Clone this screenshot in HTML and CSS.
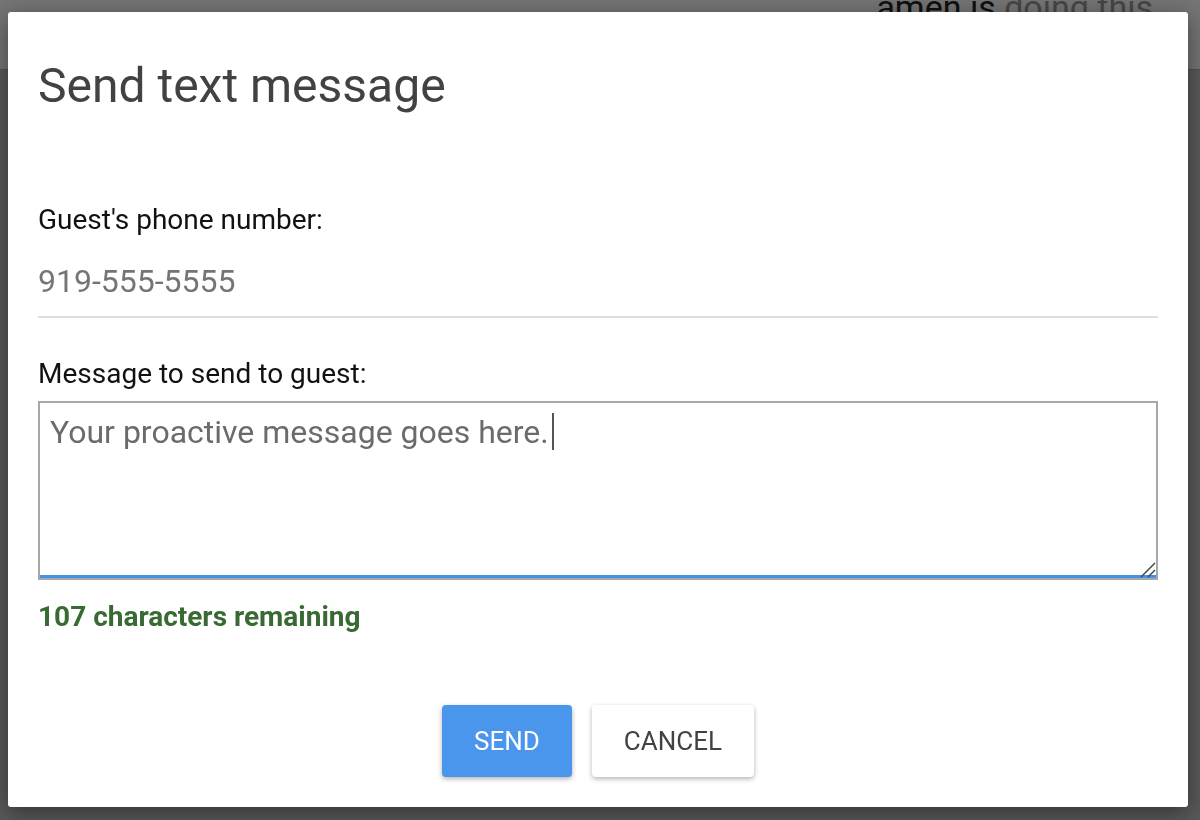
FILE: index.html
```html
<!DOCTYPE html>
<html lang="en">
<head>
<meta charset="utf-8">
<title>Send text message</title>
<link rel="stylesheet" href="styles.css">
</head>
<body>
<div class="page">
  <header class="topbar">
    <p class="status"><span class="status-name">amen is</span> <span class="status-action">doing this</span></p>
  </header>
  <main class="page-body"></main>
</div>
<div class="backdrop">
  <section class="dialog" role="dialog" aria-labelledby="dlg-title">
    <h2 class="dialog-title" id="dlg-title">Send text message</h2>
    <label class="field-label" for="phone">Guest's phone number:</label>
    <input class="phone-input" id="phone" type="tel" placeholder="919-555-5555">
    <label class="field-label msg-label" for="msg">Message to send to guest:</label>
    <div class="message-box" id="msg" role="textbox" aria-multiline="true"><span class="message-text">Your proactive message goes here.</span><span class="caret"></span><svg class="grip" viewBox="0 0 16 16" aria-hidden="true"><path d="M15 1 L1 15 M15 8 L8 15" stroke="#4a4a4a" stroke-width="1.5" fill="none"/></svg></div>
    <p class="counter">107 characters remaining</p>
    <div class="actions">
      <button class="btn btn-primary" type="button">SEND</button>
      <button class="btn btn-default" type="button">CANCEL</button>
    </div>
  </section>
</div>
</body>
</html>
```

FILE: styles.css
```css
* { box-sizing: border-box; }
html, body { margin: 0; height: 100%; }
body {
  font-family: Roboto, "Liberation Sans", Arial, sans-serif;
  background: #c4c4c4;
  overflow: hidden;
}
.page { height: 100%; display: flex; flex-direction: column; }
.topbar {
  height: 70px;
  background: #fff;
  border-bottom: 1px solid #b4b4b4;
  display: flex;
  justify-content: flex-end;
  padding-right: 47px;
  overflow: hidden;
}
.status {
  margin: -13px 0 0;
  font-size: 34px;
  line-height: 40px;
  white-space: nowrap;
}
.status-name { color: #222; }
.status-action { color: #9a9a9a; }
.page-body { flex: 1; background: #c4c4c4; }

.backdrop {
  position: fixed;
  inset: 0;
  background: rgba(0, 0, 0, 0.545);
  padding: 12px 12px 13px 8px;
  display: flex;
  align-items: flex-start;
}
.dialog {
  width: 1180px;
  height: 795px;
  background: #fff;
  border-radius: 3px;
  box-shadow: 0 6px 24px rgba(0, 0, 0, 0.45);
  padding: 46px 30px 30px;
  display: flex;
  flex-direction: column;
}
.dialog-title {
  margin: 0;
  font-size: 48px;
  line-height: 56px;
  font-weight: 400;
  color: #424242;
}
.field-label {
  display: block;
  margin-top: 89px;
  font-size: 28px;
  line-height: 33px;
  color: #111;
}
.phone-input {
  display: block;
  width: 100%;
  height: 56px;
  margin-top: 26px;
  padding: 0 0 16px;
  border: none;
  border-bottom: 2px solid #dddddd;
  font-family: Roboto, "Liberation Sans", Arial, sans-serif;
  font-size: 32px;
  line-height: 38px;
  color: #333;
  background: transparent;
  outline: none;
}
.phone-input::placeholder { color: #757575; opacity: 1; }
.msg-label { margin-top: 39px; }
.message-box {
  position: relative;
  height: 179px;
  margin-top: 11px;
  padding: 10px;
  border: 2px solid #a8a8a8;
  box-shadow: inset 0 -3px 0 #4591e8;
  font-size: 32px;
  line-height: 38px;
  color: #6b6b6b;
}
.caret {
  display: inline-block;
  width: 2px;
  height: 37px;
  margin-left: 3px;
  background: #555;
  vertical-align: top;
}
.grip {
  position: absolute;
  right: 0;
  bottom: 0;
  width: 16px;
  height: 16px;
}
.counter {
  margin: 20px 0 0;
  font-size: 28px;
  line-height: 33px;
  font-weight: 700;
  color: #3a6a34;
}
.actions {
  margin-top: 72px;
  display: flex;
  justify-content: center;
  gap: 20px;
}
.btn {
  height: 72px;
  padding: 0 32px;
  border: none;
  border-radius: 4px;
  font-family: Roboto, "Liberation Sans", Arial, sans-serif;
  font-size: 26px;
  box-shadow: 0 2px 5px rgba(0, 0, 0, 0.3);
  cursor: pointer;
}
.btn-primary { background: #4a96ec; color: #fff; }
.btn-default { background: #fff; color: #424242; }
```
